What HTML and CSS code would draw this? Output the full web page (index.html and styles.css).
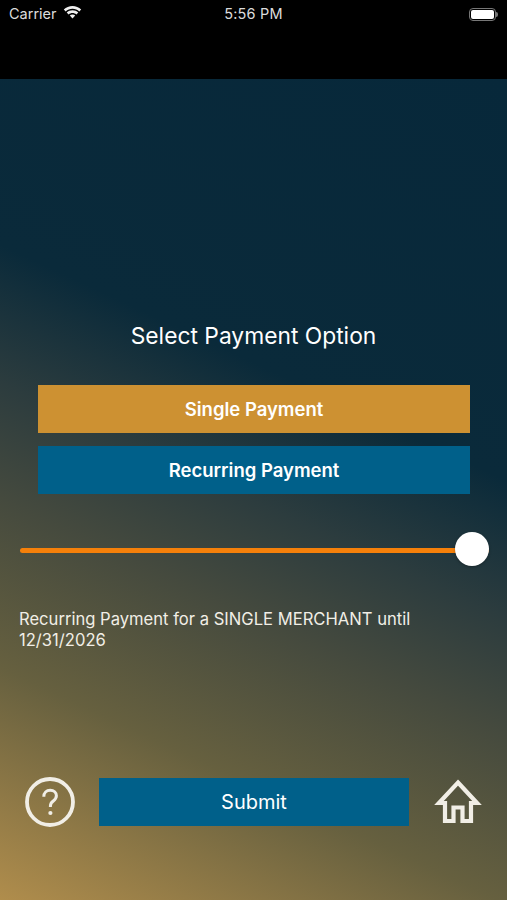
FILE: index.html
```html
<!DOCTYPE html>
<html lang="en">
<head>
<meta charset="UTF-8">
<title>Select Payment Option</title>
<link rel="stylesheet" href="styles.css">
</head>
<body>
<div class="statusbar">
	<div class="status-left">
		<span class="carrier">Carrier</span>
		<svg class="wifi" width="19" height="14" viewBox="0 0 19 14"><path d="M9.500 2.800c2.600 0 5 1 6.800 2.700l1.900-2C15.900 1.300 12.800 0 9.500 0S3.100 1.300.800 3.500l1.900 2C4.500 3.800 6.900 2.800 9.500 2.800z" fill="#efefef"/><path d="M9.500 7c1.500 0 2.800.5 3.900 1.500l1.900-2C13.700 5 11.700 4.200 9.500 4.200S5.300 5 3.700 6.500l1.900 2C6.700 7.500 8 7 9.500 7z" fill="#efefef"/><path d="M9.500 8.400c-1 0-2 .4-2.700 1.100l2.700 3 2.700-3c-.7-.7-1.700-1.100-2.700-1.100z" fill="#efefef"/></svg>
	</div>
	<span class="clock">5:56 PM</span>
	<div class="battery"><div class="battery-body"><div class="battery-fill"></div></div><div class="battery-tip"></div></div>
</div>

<div class="screen">
	<h1 class="title">Select Payment Option</h1>
	<div class="options">
		<button class="btn btn-gold">Single Payment</button>
		<button class="btn btn-blue">Recurring Payment</button>
	</div>
	<div class="slider">
		<div class="slider-track"></div>
		<div class="slider-thumb"></div>
	</div>
	<p class="note">Recurring Payment for a SINGLE MERCHANT until 12/31/2026</p>
	<div class="footer">
		<svg class="help" width="52" height="52" viewBox="0 0 52 52"><circle cx="26" cy="26" r="23" fill="none" stroke="#f1eee6" stroke-width="3.800"/><path d="M19.800 20.800c0-4 2.700-6.500 6.400-6.500s6.200 2.300 6.200 5.500c0 2.500-1.300 3.800-3.100 5.200-2 1.500-2.900 2.500-2.900 5v1.100" fill="none" stroke="#f1eee6" stroke-width="3"/><circle cx="26.400" cy="37" r="2.100" fill="#f1eee6"/></svg>
		<button class="btn btn-blue btn-submit">Submit</button>
		<svg class="home" width="48" height="46" viewBox="0 0 48 46"><path d="M24 3.500 L43 24 H37 V42 H28.500 V28.500 H19.500 V42 H11 V24 H5 Z" fill="none" stroke="#f1eee6" stroke-width="4.200" stroke-linejoin="miter"/></svg>
	</div>
</div>
</body>
</html>
```
FILE: styles.css
```css
*{
	box-sizing: border-box;
}
html, body{
	margin: 0;
	height: 900px;
	overflow: hidden;
}
body{
	font-family: Inter, "Liberation Sans", sans-serif;
	color: #fff;
	background-color: #000;
}
.statusbar{
	height: 79px;
	padding: 3px 9px 0 9px;
	display: flex;
	align-items: flex-start;
	justify-content: space-between;
	font-size: 14.500px;
	line-height: 22px;
	color: #dcdcdc;
}
.status-left{
	display: flex;
	align-items: center;
	gap: 6px;
	width: 140px;
}
.wifi{
	margin-top: -3px;
}
.clock{
	letter-spacing: 0.2px;
}
.battery{
	width: 140px;
	display: flex;
	justify-content: flex-end;
	align-items: center;
	height: 22px;
}
.battery-body{
	width: 27px;
	height: 13px;
	border: 1px solid #777;
	border-radius: 4px;
	padding: 1px;
}
.battery-fill{
	height: 100%;
	background-color: #fff;
	border-radius: 2px;
}
.battery-tip{
	width: 2px;
	height: 5px;
	background-color: #777;
	border-radius: 0 2px 2px 0;
}
.screen{
	height: 821px;
	padding-top: 243px;
	display: flex;
	flex-direction: column;
	background: linear-gradient(205deg, #07283a 0%, #0a2a3a 38%, #2c3c3e 51%, #454a3e 62%, #66603f 78%, #b08d4c 100%);
}
.title{
	margin: 0;
	font-size: 22.800px;
	font-weight: 400;
	line-height: 28px;
	text-align: center;
}
.options{
	margin: 35px 37px 0 38px;
	display: flex;
	flex-direction: column;
	gap: 13px;
}
.btn{
	display: block;
	height: 48px;
	border: 0;
	padding: 0;
	color: #fff;
	font-family: inherit;
	font-size: 18.500px;
	font-weight: 600;
}
.btn-gold{
	background-color: #cd9132;
}
.btn-blue{
	background-color: #00608a;
}
.slider{
	position: relative;
	height: 34px;
	margin: 38px 18px 0 20px;
	display: flex;
	align-items: center;
}
.slider-track{
	width: 100%;
	height: 5px;
	margin-top: 2px;
	border-radius: 3px;
	background-color: #f5800a;
}
.slider-thumb{
	position: absolute;
	right: 0;
	top: 0;
	width: 34px;
	height: 34px;
	border-radius: 50%;
	background-color: #fff;
	box-shadow: 0 1px 3px rgba(0,0,0,0.3);
}
.note{
	margin: 43px 60px 0 19px;
	font-size: 16.600px;
	line-height: 21px;
	color: #f1eee6;
}
.footer{
	margin-top: 125px;
	height: 52px;
	display: flex;
	align-items: center;
	padding: 0 24px;
}
.btn-submit{
	width: 310px;
	margin-left: 23px;
	font-size: 20px;
	font-weight: 400;
}
.help{
	flex: none;
}
.home{
	flex: none;
	margin-left: 25px;
}
```
